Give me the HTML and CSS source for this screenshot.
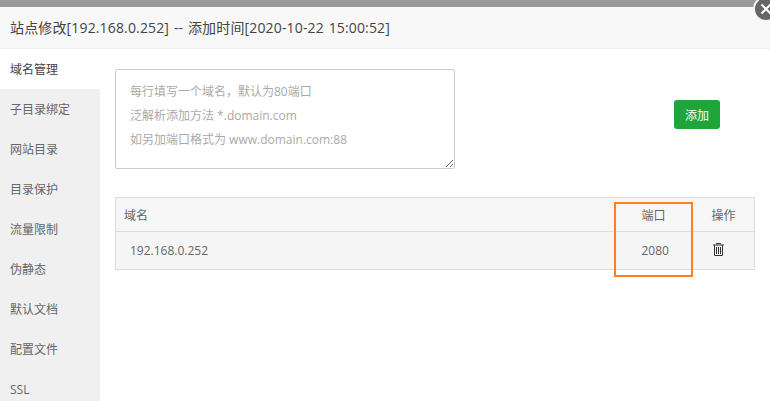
FILE: index.html

```html
<!DOCTYPE html>
<html lang="zh-CN">
<head>
  <meta charset="UTF-8" />
  <title>站点修改</title>
  <link rel="stylesheet" href="styles.css">
</head>
<body>
  <div class="backdrop"></div>
  <div class="layer">
    <a class="layer-close" href="#">
      <svg viewBox="0 0 12 12" width="12" height="12"><path d="M1.5 1.5L10.5 10.5M10.5 1.5L1.5 10.5" stroke="#fff" stroke-width="2" fill="none"/></svg>
    </a>
    <div class="layer-title">站点修改[192.168.0.252] -- 添加时间[2020-10-22 15:00:52]</div>
    <div class="layer-body">
      <ul class="side-menu">
        <li class="active">域名管理</li>
        <li>子目录绑定</li>
        <li>网站目录</li>
        <li>目录保护</li>
        <li>流量限制</li>
        <li>伪静态</li>
        <li>默认文档</li>
        <li>配置文件</li>
        <li>SSL</li>
      </ul>
      <div class="content">
        <div class="add-row">
          <textarea class="domain-input" placeholder="每行填写一个域名，默认为80端口&#10;泛解析添加方法 *.domain.com&#10;如另加端口格式为 www.domain.com:88"></textarea>
          <button class="btn-add">添加</button>
        </div>
        <div class="table-wrap">
          <table class="domain-table">
            <thead>
              <tr>
                <th class="col-name">域名</th>
                <th class="col-port">端口</th>
                <th class="col-op">操作</th>
              </tr>
            </thead>
            <tbody>
              <tr>
                <td class="col-name"><span class="domain-name">192.168.0.252</span></td>
                <td class="col-port">2080</td>
                <td class="col-op">
                  <svg class="icon-trash" viewBox="0 0 11 13" width="11" height="13">
                    <path d="M3.5 1.5V.5h4v1M0 2h11M1.5 2v10.5h8V2M3.5 4v7M5.5 4v7M7.5 4v7" stroke="#333" stroke-width="1" fill="none"/>
                  </svg>
                </td>
              </tr>
            </tbody>
          </table>
          <div class="port-highlight"></div>
        </div>
      </div>
    </div>
  </div>
</body>
</html>
```

FILE: styles.css

```css
* {
  box-sizing: border-box;
}
html, body {
  height: 100%;
}
body {
  margin: 0;
  overflow: hidden;
  background: #fff;
  color: #666;
  font-family: "Open Sans", "Noto Sans CJK SC", sans-serif;
  font-size: 12px;
}
.backdrop {
  height: 7px;
  background: #999;
}
.layer {
  position: relative;
}
.layer-close {
  position: absolute;
  top: -11px;
  right: -9px;
  width: 26px;
  height: 26px;
  border-radius: 50%;
  background: #666;
  border: 2px solid #f4f4f4;
  display: flex;
  align-items: center;
  justify-content: center;
}
.layer-title {
  height: 42px;
  padding-left: 10px;
  line-height: 41px;
  font-size: 14px;
  letter-spacing: .15px;
  word-spacing: 1px;
  color: #444;
  background: #f8f8f8;
  border-bottom: 1px solid #eee;
}
.layer-body {
  display: flex;
  height: 352px;
}
.side-menu {
  width: 100px;
  margin: 0;
  padding: 0;
  list-style: none;
  background: #f0f0f0;
  flex-shrink: 0;
}
.side-menu li {
  height: 40px;
  line-height: 42px;
  padding-left: 10px;
  color: #666;
}
.side-menu li.active {
  background: #fff;
  color: #444;
}
.content {
  flex: 1;
  padding: 20px 15px 0;
}
.add-row {
  display: flex;
  align-items: flex-start;
  width: 605px;
}
.domain-input {
  display: block;
  width: 340px;
  height: 100px;
  padding: 10px 14px;
  border: 1px solid #ccc;
  border-radius: 2px;
  font: inherit;
  line-height: 24px;
  outline: none;
}
.domain-input::placeholder {
  color: #aaa;
  opacity: 1;
}
.btn-add {
  margin: 31px 0 0 219px;
  width: 46px;
  height: 29px;
  padding: 0;
  border: none;
  border-radius: 3px;
  background: #20a53a;
  color: #fff;
  font: inherit;
}
.table-wrap {
  position: relative;
  margin-top: 28px;
  width: 640px;
}
.domain-table {
  width: 100%;
  border-collapse: collapse;
  table-layout: fixed;
  border: 1px solid #ddd;
}
.domain-table th {
  height: 34px;
  padding: 0 0 0 8px;
  text-align: left;
  font-weight: normal;
  background: #f6f6f6;
  color: #666;
  border-bottom: 1px solid #ddd;
}
.domain-table td {
  height: 38px;
  padding: 0 0 0 8px;
  background: #f5f5f5;
  color: #666;
}
.col-port {
  width: 70px;
}
.col-op {
  width: 51px;
}
.domain-name {
  padding-left: 6px;
}
.icon-trash {
  display: block;
  margin: -2px 0 0 1px;
}
.port-highlight {
  position: absolute;
  left: 499px;
  top: 5px;
  width: 79px;
  height: 75px;
  border: 2px solid #ff7f27;
}
```
